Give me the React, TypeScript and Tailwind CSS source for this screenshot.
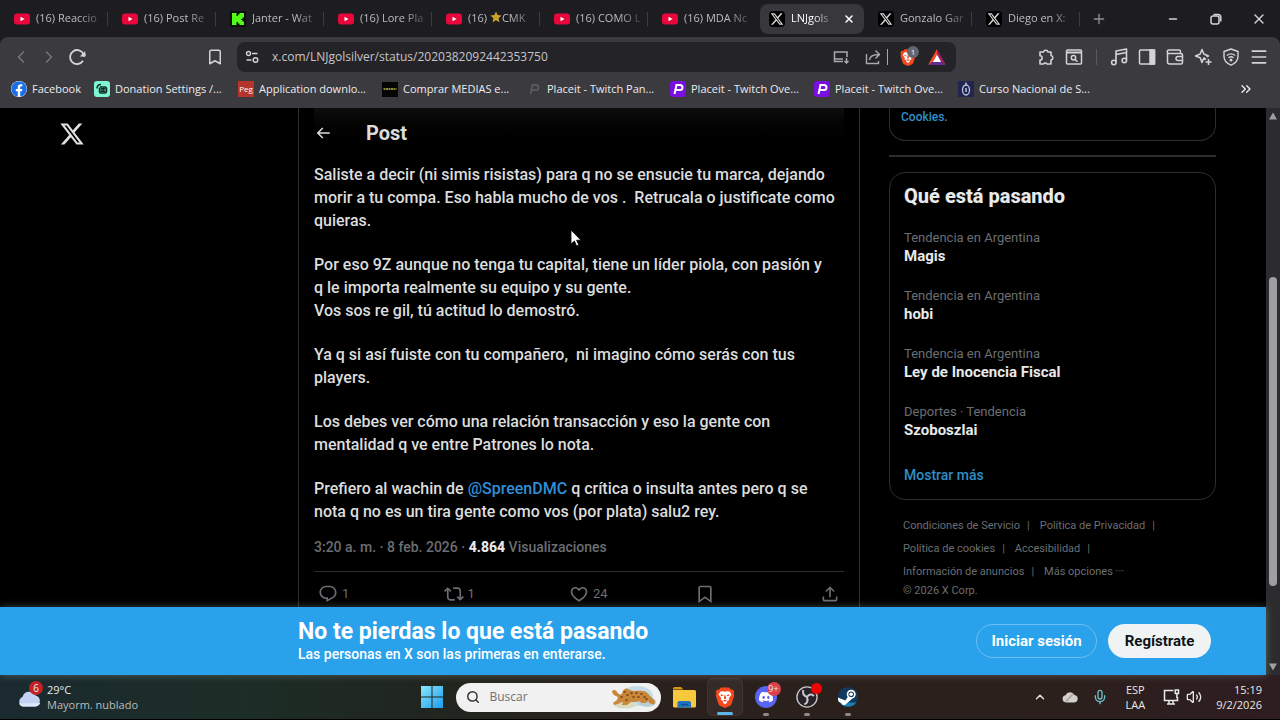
import { ReactNode } from 'react'
import { FaFacebook } from 'react-icons/fa'
import { SiDiscord } from 'react-icons/si'
import {
  Bookmark,
  ChevronLeft,
  ChevronRight,
  ChevronUp,
  ChevronsRight,
  Menu,
  Mic,
  Minus,
  Plus,
  Search,
  Volume2,
  X,
} from 'lucide-react'

interface IconProps {
  className?: string
}

interface TabInfo {
  icon: 'youtube' | 'kick' | 'x'
  title: ReactNode
  name: string
  active?: boolean
  divider?: boolean
}

const X_LOGO =
  'M18.244 2.25h3.308l-7.227 8.26 8.502 11.24H16.17l-5.214-6.817L4.99 21.75H1.68l7.73-8.835L1.254 2.25H8.08l4.713 6.231zm-1.161 17.52h1.833L7.084 4.126H5.117z'
const REPLY =
  'M1.751 10c0-4.42 3.584-8 8.005-8h4.366c4.49 0 8.129 3.64 8.129 8.13 0 2.96-1.607 5.68-4.196 7.11l-8.054 4.46v-3.69h-.067c-4.49.1-8.183-3.51-8.183-8.01zm8.005-6c-3.317 0-6.005 2.69-6.005 6 0 3.37 2.77 6.08 6.138 6.01l.351-.01h1.761v2.3l5.087-2.81c1.951-1.08 3.163-3.13 3.163-5.36 0-3.39-2.744-6.13-6.129-6.13H9.756z'
const REPOST =
  'M4.5 3.88l4.432 4.14-1.364 1.46L5.5 7.55V16c0 1.1.896 2 2 2H13v2H7.5c-2.209 0-4-1.79-4-4V7.55L1.432 9.48.068 8.02 4.5 3.88zM16.5 6H11V4h5.5c2.209 0 4 1.79 4 4v8.45l2.068-1.93 1.364 1.46-4.432 4.14-4.432-4.14 1.364-1.46 2.068 1.93V8c0-1.1-.896-2-2-2z'
const LIKE =
  'M16.697 5.5c-1.222-.06-2.679.51-3.89 2.16l-.805 1.09-.806-1.09C9.984 6.01 8.526 5.44 7.304 5.5c-1.243.07-2.349.78-2.91 1.91-.552 1.12-.633 2.78.479 4.82 1.074 1.97 3.257 4.27 7.129 6.61 3.87-2.34 6.052-4.64 7.126-6.61 1.111-2.04 1.03-3.7.477-4.82-.561-1.13-1.666-1.84-2.908-1.91zm4.187 7.69c-1.351 2.48-4.001 5.12-8.379 7.67l-.503.3-.504-.3c-4.379-2.55-7.029-5.19-8.382-7.67-1.36-2.5-1.41-4.86-.514-6.67.887-1.79 2.647-2.91 4.601-3.01 1.651-.09 3.368.56 4.798 2.01 1.429-1.45 3.146-2.1 4.796-2.01 1.954.1 3.714 1.22 4.601 3.01.896 1.81.846 4.17-.514 6.67z'
const SAVE =
  'M4 4.5C4 3.12 5.119 2 6.5 2h11C18.881 2 20 3.12 20 4.5v18.44l-8-5.71-8 5.71V4.5zM6.5 4c-.276 0-.5.22-.5.5v14.56l6-4.29 6 4.29V4.5c0-.28-.224-.5-.5-.5h-11z'
const SHARE =
  'M12 2.59l5.7 5.7-1.41 1.42L13 6.41V16h-2V6.41l-3.3 3.3-1.41-1.42L12 2.59zM21 15l-.02 3.51c0 1.38-1.12 2.49-2.5 2.49H5.5C4.11 21 3 19.88 3 18.5V15h2v3.5c0 .28.22.5.5.5h12.98c.28 0 .5-.22.5-.5L19 15h2z'
const BACK = 'M7.414 13l5.043 5.04-1.414 1.42L3.586 12l7.457-7.46 1.414 1.42L7.414 11H21v2H7.414z'

const Glyph = ({ d, className }: { d: string; className?: string }) => (
  <svg viewBox="0 0 24 24" fill="currentColor" className={className}>
    <path d={d} />
  </svg>
)

const YoutubeIcon = () => (
  <svg viewBox="0 0 16 16" className="w-4 h-4 shrink-0">
    <rect x="0" y="2.5" width="16" height="11" rx="3" fill="#e8063a" />
    <path d="M6.5 5.8 10.5 8l-4 2.2z" fill="#fff" />
  </svg>
)

const KickIcon = () => (
  <svg viewBox="0 0 16 16" className="w-4 h-4 shrink-0">
    <rect width="16" height="16" rx="1" fill="#0b0f0a" />
    <path d="M2 2h4.5v3H8V3.5h1.5V2H14v4.5h-1.5V8H11v1h1.5v1.5H14V14H9.5v-1.5H8V11H6.5v3H2z" fill="#53fc18" />
  </svg>
)

const XIcon = () => (
  <span className="w-4 h-4 shrink-0 rounded-sm bg-black text-[#d8d8d8] grid place-items-center">
    <Glyph d={X_LOGO} className="w-[14px] h-[14px]" />
  </span>
)

const BraveIcon = ({ className }: IconProps) => (
  <svg viewBox="0 0 24 24" className={className}>
    <path d="M16.5 1.5h-9L5.3 4 3.5 3.8 1.8 6.3l.8 2.1-.7 1.9 3 9.2c.3.9.7 1.4 1.5 2L12 24l5.6-2.5c.8-.6 1.2-1.1 1.5-2l3-9.2-.7-1.9.8-2.1-1.7-2.5-1.8.2z" fill="#f4481e" />
    <path d="M12 6.2 9.6 5.7 7 6.1 4.9 9.3l3 4.1-.6 1.7 2.9 1.7-.6 1.4L12 20l2.4-1.8-.6-1.4 2.9-1.7-.6-1.7 3-4.1L17 6.1l-2.6-.4z" fill="#fff" />
    <path d="m6.8 9 3.4.9-.8 1.3-1.8-.7zM17.2 9l-3.4.9.8 1.3 1.8-.7zM11.3 10h1.4l.5 3.6-1.2.8-1.2-.8zM9.8 15.7 12 14.9l2.2.8L12 17.2z" fill="#f4481e" />
  </svg>
)

const BatIcon = () => (
  <svg viewBox="0 0 18 16" className="w-[18px] h-4">
    <path d="M9 0 0 16l4.8-3L9 5.5z" fill="#ff4724" />
    <path d="M9 0l9 16-4.8-3L9 5.5z" fill="#9e1f63" />
    <path d="M0 16h18l-4.8-3H4.8z" fill="#662d91" />
    <path d="m9 5.5 4.2 7.5H4.8z" fill="#fff" />
  </svg>
)

const ReloadIcon = () => (
  <svg viewBox="0 0 18 18" className="w-[18px] h-[18px]" fill="none" stroke="currentColor" strokeWidth="1.8">
    <path d="M15 12.8A7 7 0 1 1 15.6 6.5" />
    <circle cx="15.8" cy="6.8" r="2" fill="currentColor" stroke="none" />
    <path d="M17.2 3v5.6h-5.4z" fill="currentColor" stroke="none" />
  </svg>
)

const SiteInfoIcon = () => (
  <svg viewBox="0 0 14 14" className="w-[14px] h-[14px]" fill="none" stroke="currentColor" strokeWidth="1.4">
    <circle cx="3.5" cy="3.5" r="2" />
    <path d="M7 3.5h5.5M1.5 10h5" />
    <circle cx="10.5" cy="10" r="2.3" />
  </svg>
)

const InstallIcon = () => (
  <svg viewBox="0 0 16 14" className="w-4 h-[14px]" fill="none" stroke="currentColor" strokeWidth="1.5">
    <path d="M14 7V2H1.5v9.5H10M1.500 9H10M13.5 8v4.5M11.5 11l2 2 2-2" />
  </svg>
)

const ShareArrowIcon = () => (
  <svg viewBox="0 0 16 16" className="w-4 h-4" fill="none" stroke="currentColor" strokeWidth="1.4">
    <path d="M1.5 5v9.5h12V12" />
    <path d="M4.5 11c.3-3.500 2.500-5.500 9.500-5.500M10.500 1.500l4 4-4 4" strokeLinejoin="round" />
  </svg>
)

const PuzzleIcon = () => (
  <svg viewBox="0 0 18 18" className="w-[18px] h-[18px]" fill="none" stroke="currentColor" strokeWidth="1.6" strokeLinejoin="round">
    <path d="M3 4h3.5a2.3 2.3 0 0 1 4.5 0H14v3.5a2.3 2.3 0 0 1 0 4.5v4h-4a2 2 0 0 0-3.5 0H3v-4a2 2 0 0 0 0-4.2z" />
  </svg>
)

const FindWindowIcon = () => (
  <svg viewBox="0 0 18 18" className="w-[18px] h-[18px]" fill="none" stroke="currentColor" strokeWidth="1.5">
    <rect x="1.5" y="2" width="15" height="14" rx="1" />
    <path d="M1.5 4.5h15" strokeWidth="2" />
    <circle cx="8.5" cy="9.8" r="2.2" />
    <path d="m10.2 11.5 2.2 2.2" />
  </svg>
)

const MusicIcon = () => (
  <svg viewBox="0 0 18 18" className="w-[18px] h-[18px]" fill="none" stroke="currentColor" strokeWidth="1.6" strokeLinejoin="round">
    <path d="M6 14V3l10.5-2v11M6 6.5l10.5-2" />
    <circle cx="3.8" cy="14.5" r="2.2" />
    <circle cx="14.3" cy="12.5" r="2.2" />
  </svg>
)

const SidebarIcon = () => (
  <svg viewBox="0 0 18 18" className="w-[18px] h-[18px]" fill="none" stroke="currentColor" strokeWidth="1.5">
    <rect x="1.5" y="2" width="15" height="14" rx="1" />
    <path d="M12 2h4.5v14H12z" fill="currentColor" />
  </svg>
)

const WalletIcon = () => (
  <svg viewBox="0 0 18 18" className="w-[18px] h-[18px]" fill="none" stroke="currentColor" strokeWidth="1.5">
    <path d="M14.5 5V3.5A1.500 1.500 0 0 0 13 2H3a1.700 1.700 0 0 0 0 3.500h12a1.500 1.500 0 0 1 1.500 1.500v7.500a1.500 1.500 0 0 1-1.500 1.500H3.500a2 2 0 0 1-2-2V4" />
    <path d="M16.5 8.5H12a2 2 0 0 0 0 4h4.5" />
  </svg>
)

const SparkleIcon = () => (
  <svg viewBox="0 0 18 18" className="w-[18px] h-[18px]" fill="none" stroke="currentColor" strokeWidth="1.5" strokeLinejoin="round">
    <path d="M12 11.300 9.800 10 8 14.500 6.200 9.800 1.500 8l4.700-2L8 1.500 9.800 6l4.700 2-2 .9" />
    <path d="M14.500 11v6M11.500 14h6" />
  </svg>
)

const VpnIcon = () => (
  <svg viewBox="0 0 18 18" className="w-[18px] h-[18px]" fill="none" stroke="currentColor" strokeWidth="1.4">
    <path d="M9 1 16 3.500v5c0 4-3 7-7 8.700-4-1.700-7-4.700-7-8.700v-5z" strokeLinejoin="round" />
    <path d="M4.800 7.500c2.600-2 5.800-2 8.400 0M6.500 9.800c1.500-1.200 3.500-1.200 5 0" />
    <circle cx="9" cy="12" r=".8" fill="currentColor" />
  </svg>
)

const RestoreIcon = () => (
  <svg viewBox="0 0 12 12" className="w-3 h-3" fill="none" stroke="currentColor" strokeWidth="1.5">
    <rect x="1" y="3" width="8" height="8" rx="2" />
    <path d="M3.5 1.500H8a2.800 2.800 0 0 1 2.800 2.800v4.200" />
  </svg>
)

const PlaceitIcon = ({ dim }: { dim?: boolean }) => (
  <svg viewBox="0 0 16 16" className="w-4 h-4 shrink-0">
    {!dim && <rect width="16" height="16" rx="3" fill="#7a0fe0" />}
    <path
      d="M5.500 4H10a2.200 2.200 0 0 1 0 5H6M6.500 4 4.500 13"
      fill="none"
      stroke={dim ? '#59595c' : '#fff'}
      strokeWidth="2"
    />
  </svg>
)

const tabIcons = {
  youtube: <YoutubeIcon />,
  kick: <KickIcon />,
  x: <XIcon />,
}

const tabs: TabInfo[] = [
  { icon: 'youtube', name: 'reaccion', title: '(16) Reaccio', divider: true },
  { icon: 'youtube', name: 'post', title: '(16) Post Re', divider: true },
  { icon: 'kick', name: 'janter', title: 'Janter - Wat', divider: true },
  { icon: 'youtube', name: 'lore', title: '(16) Lore Pla', divider: true },
  {
    icon: 'youtube',
    name: 'cmk',
    title: (
      <>
        (16){' '}
        <svg viewBox="0 0 12 12" className="inline w-3 h-3 mb-1">
          <path d="m6 .5 1.600 3.600 4 .4-3 2.700.9 4L6 9.200l-3.500 2 .9-4-3-2.700 4-.4z" fill="#c9a227" />
        </svg>
        CMK
      </>
    ),
    divider: true,
  },
  { icon: 'youtube', name: 'como', title: '(16) COMO L', divider: true },
  { icon: 'youtube', name: 'mda', title: '(16) MDA Nc' },
  { icon: 'x', name: 'lnj', title: 'LNJgols', active: true },
  { icon: 'x', name: 'gonzalo', title: 'Gonzalo Gar', divider: true },
  { icon: 'x', name: 'diego', title: 'Diego en X:', divider: true },
]

const bookmarks = [
  {
    title: 'Donation Settings /...',
    icon: (
      <svg viewBox="0 0 16 16" className="w-4 h-4 shrink-0">
        <rect width="16" height="16" rx="3" fill="#80f5d2" />
        <path d="M6 6h5a1.500 1.500 0 0 1 1.500 1.500v3A1.500 1.500 0 0 1 11 12H7a1.500 1.500 0 0 1-1.500-1.500V6.500M3 7.500C3 5 4.500 3.500 7 3.500" fill="none" stroke="#0b2b24" strokeWidth="1.5" />
        <path d="M6.500 7h5v4h-5z" fill="#0b2b24" />
        <path d="M7.500 8.500h1v1h-1zM9.800 8.500h1v1h-1z" fill="#80f5d2" />
      </svg>
    ),
  },
  {
    title: 'Application downlo...',
    icon: (
      <span className="w-4 h-4 shrink-0 bg-[#b5352c] text-white text-[8px] leading-4 text-center overflow-hidden">Peg</span>
    ),
  },
  {
    title: 'Comprar MEDIAS e...',
    icon: (
      <svg viewBox="0 0 16 16" className="w-4 h-4 shrink-0">
        <rect y="1" width="16" height="15" fill="#050505" />
        <path d="M1.500 8h13" stroke="#8a8c3a" strokeWidth="2" strokeDasharray="2 .5" />
      </svg>
    ),
  },
  { title: 'Placeit - Twitch Pan...', icon: <PlaceitIcon dim /> },
  { title: 'Placeit - Twitch Ove...', icon: <PlaceitIcon /> },
  { title: 'Placeit - Twitch Ove...', icon: <PlaceitIcon /> },
  {
    title: 'Curso Nacional de S...',
    icon: (
      <svg viewBox="0 0 16 16" className="w-4 h-4 shrink-0">
        <rect width="16" height="16" fill="#22264f" />
        <ellipse cx="8" cy="9" rx="3.5" ry="5" fill="none" stroke="#b9c2e0" strokeWidth="1.3" />
        <path d="M8 1.500v3M8 7v4" stroke="#b9c2e0" strokeWidth="1.5" />
      </svg>
    ),
  },
]

const paragraphs: ReactNode[] = [
  <>
    Saliste a decir (ni simis risistas) para q no se ensucie tu marca, dejando
    <br />
    morir a tu compa. Eso habla mucho de vos .&nbsp; Retrucala o justificate como
    <br />
    quieras.
  </>,
  <>
    Por eso 9Z aunque no tenga tu capital, tiene un líder piola, con pasión y
    <br />q le importa realmente su equipo y su gente.
    <br />
    Vos sos re gil, tú actitud lo demostró.
  </>,
  <>
    Ya q si así fuiste con tu compañero,&nbsp; ni imagino cómo serás con tus
    <br />
    players.
  </>,
  <>
    Los debes ver cómo una relación transacción y eso la gente con
    <br />
    mentalidad q ve entre Patrones lo nota.
  </>,
  <>
    Prefiero al wachin de{' '}
    <a href="#spreen" className="text-[#2f8fd8]">
      @SpreenDMC
    </a>{' '}
    q crítica o insulta antes pero q se
    <br />
    nota q no es un tira gente como vos (por plata) salu2 rey.
  </>,
]

const trends = [
  { label: 'Tendencia en Argentina', name: 'Magis' },
  { label: 'Tendencia en Argentina', name: 'hobi' },
  { label: 'Tendencia en Argentina', name: 'Ley de Inocencia Fiscal' },
  { label: 'Deportes · Tendencia', name: 'Szoboszlai' },
]

const footerRows = [
  ['Condiciones de Servicio', 'Política de Privacidad'],
  ['Política de cookies', 'Accesibilidad'],
  ['Información de anuncios', 'Más opciones ···'],
]

const actions = [
  { label: 'Responder', d: REPLY, count: '1' },
  { label: 'Repostear', d: REPOST, count: '1' },
  { label: 'Me gusta', d: LIKE, count: '24' },
  { label: 'Guardar', d: SAVE },
  { label: 'Compartir', d: SHARE },
]

const Tab = ({ tab }: { tab: TabInfo }) => (
  <div className="w-[108px] h-[30px] shrink-0 px-[2px] flex items-center">
    <div
      className={
        tab.active
          ? 'flex-1 min-w-0 h-full flex items-center rounded-lg bg-[#38373c] pl-[9px] pr-[9px] text-white'
          : 'flex-1 min-w-0 h-full flex items-center pl-[10px] text-[#bdbdc1]'
      }
    >
      {tabIcons[tab.icon]}
      <button
        className={
          tab.active
            ? 'ml-[6px] w-11 overflow-hidden whitespace-nowrap text-left text-[11px] [mask-image:linear-gradient(to_right,black_50%,transparent)]'
            : 'ml-[6px] flex-1 overflow-hidden whitespace-nowrap text-left text-[11px] [mask-image:linear-gradient(to_right,black_60%,transparent)]'
        }
      >
        {tab.title}
      </button>
      {tab.active && (
        <button aria-label="Cerrar pestaña" className="ml-auto">
          <X className="w-3 h-3" strokeWidth={3} />
        </button>
      )}
    </div>
    {tab.divider && <span className="w-px h-[14px] bg-[#3d3c41]" />}
  </div>
)

const ToolButton = ({ label, children }: { label: string; children: ReactNode }) => (
  <button aria-label={label} className="w-7 h-7 grid place-items-center shrink-0">
    {children}
  </button>
)

const BrowserHeader = () => (
  <header className="shrink-0 bg-[#1d1c21] text-[#d4d4d7] font-['Open_Sans','Noto_Sans',sans-serif]">
    <div className="h-[37px] pl-[2px] flex items-center">
      {tabs.map((tab) => (
        <Tab key={tab.name} tab={tab} />
      ))}
      <button aria-label="Nueva pestaña" className="ml-[9px] text-[#8f8f93]">
        <Plus className="w-4 h-4" />
      </button>
      <div className="ml-auto flex">
        <button aria-label="Minimizar" className="w-[43px] grid place-items-center">
          <Minus className="w-3 h-3" strokeWidth={3} />
        </button>
        <button aria-label="Restaurar" className="w-[43px] grid place-items-center">
          <RestoreIcon />
        </button>
        <button aria-label="Cerrar" className="w-[43px] grid place-items-center">
          <X className="w-4 h-4" />
        </button>
      </div>
    </div>

    <div className="rounded-t-lg bg-[#3b3a3f]">
      <div className="h-[39px] flex items-center">
        <div className="w-[237px] shrink-0 flex items-center pl-[7px] pr-2">
          <span className="text-[#77777b] flex">
            <ToolButton label="Atrás">
              <ChevronLeft className="w-5 h-5" strokeWidth={1.8} />
            </ToolButton>
            <ToolButton label="Adelante">
              <ChevronRight className="w-5 h-5" strokeWidth={1.8} />
            </ToolButton>
          </span>
          <ToolButton label="Recargar">
            <ReloadIcon />
          </ToolButton>
          <span className="ml-auto flex">
            <ToolButton label="Agregar marcador">
              <Bookmark className="w-[18px] h-[18px]" />
            </ToolButton>
          </span>
        </div>
        <div className="flex-1 h-[30px] rounded-lg bg-[#242328] flex items-center pl-2 pr-[5px]">
          <SiteInfoIcon />
          <input
            type="text"
            aria-label="Dirección"
            defaultValue="x.com/LNJgolsilver/status/2020382092442353750"
            className="flex-1 min-w-0 ml-[13px] bg-transparent text-[12px] font-medium text-[#c6c6c9] outline-none"
          />
          <div className="flex items-center text-[#a9a9ad]">
            <span className="w-9 grid place-items-center">
              <InstallIcon />
            </span>
            <span className="w-7 grid place-items-center">
              <ShareArrowIcon />
            </span>
            <span className="w-px h-4 mr-[5px] bg-[#a9a9ad]" />
            <span className="relative w-[30px] grid place-items-center">
              <BraveIcon className="w-[18px] h-[18px]" />
              <span className="absolute -top-[2px] right-1 w-3 h-3 rounded-full bg-[#65656f] text-[8px] leading-3 text-center text-white">
                1
              </span>
            </span>
            <span className="w-7 grid place-items-center">
              <BatIcon />
            </span>
          </div>
        </div>
        <div className="w-[324px] shrink-0 flex items-center justify-end pr-[7px]">
          <ToolButton label="Extensiones">
            <PuzzleIcon />
          </ToolButton>
          <ToolButton label="Buscar pestañas">
            <FindWindowIcon />
          </ToolButton>
          <span className="w-px h-4 mx-2 bg-[#5a595e]" />
          <ToolButton label="Lista de reproducción">
            <MusicIcon />
          </ToolButton>
          <ToolButton label="Barra lateral">
            <SidebarIcon />
          </ToolButton>
          <ToolButton label="Cartera">
            <WalletIcon />
          </ToolButton>
          <ToolButton label="Leo">
            <SparkleIcon />
          </ToolButton>
          <ToolButton label="VPN">
            <VpnIcon />
          </ToolButton>
          <ToolButton label="Menú">
            <Menu className="w-5 h-5" />
          </ToolButton>
        </div>
      </div>

      <nav className="h-8 pb-[6px] pl-[11px] pr-[26px] flex items-center text-[11px] text-[#ececee]">
        <a href="#facebook" className="w-[83px] shrink-0 flex items-center gap-[5px]">
          <FaFacebook className="w-4 h-4 text-[#1a6fe8] bg-white rounded-full" />
          Facebook
        </a>
        {bookmarks.map((item, index) => (
          <a
            key={index}
            href="#bookmark"
            className="w-36 shrink-0 flex items-center gap-[5px] whitespace-nowrap"
          >
            {item.icon}
            {item.title}
          </a>
        ))}
        <button aria-label="Más marcadores" className="ml-auto">
          <ChevronsRight className="w-4 h-4" />
        </button>
      </nav>
    </div>
  </header>
)

const Post = () => (
  <main className="w-[562px] shrink-0 border-x border-[#2b2d30] px-[15px] text-[#dcdddd]">
    <div className="h-[50px] flex items-center bg-linear-to-b from-[#0d0d0d] to-black">
      <button aria-label="Volver">
        <Glyph d={BACK} className="w-[18px] h-[18px]" />
      </button>
      <h1 className="ml-[34px] text-[20px] leading-6 font-bold">Post</h1>
    </div>
    <div className="mt-[5px] flex flex-col gap-[21px] text-[16px] leading-[23px] font-medium whitespace-nowrap">
      {paragraphs.map((text, index) => (
        <p key={index}>{text}</p>
      ))}
    </div>
    <p className="mt-3 text-[14px] leading-6 font-medium text-[#6b6e72]">
      3:20 a. m. · 8 feb. 2026 · <b className="font-extrabold text-[#e7e9ea]">4.864</b> Visualizaciones
    </p>
    <div className="mt-3 border-t border-[#2b2d30] h-11 px-1 flex items-center justify-between text-[#6b6e72]">
      {actions.map((action) => (
        <button key={action.label} aria-label={action.label} className="w-5 flex items-center gap-1 text-[13px]">
          <Glyph d={action.d} className="w-5 h-5 shrink-0" />
          {action.count}
        </button>
      ))}
    </div>
  </main>
)

const Sidebar = () => (
  <aside className="w-[327px] shrink-0 ml-[29px] mr-[50px]">
    <div className="h-[33px] border-x border-b border-[#2b2d30] rounded-b-2xl px-[11px] text-[12px] leading-[18px] font-medium">
      <a href="#cookies" className="text-[#2f8fc8]">
        Cookies.
      </a>
    </div>
    <hr className="mt-[14px] border-t-2 border-[#2b2d30]" />
    <section className="mt-[15px] h-[328px] border border-[#2b2d30] rounded-2xl px-[14px]">
      <h2 className="mt-2 text-[20px] leading-[30px] font-extrabold text-[#e7e9ea]">Qué está pasando</h2>
      <ul className="mt-[17px]">
        {trends.map((trend) => (
          <li key={trend.name} className="h-[58px]">
            <p className="text-[13px] leading-[19px] text-[#6b6e72]">{trend.label}</p>
            <p className="text-[15px] leading-[19px] font-bold text-[#e7e9ea]">{trend.name}</p>
          </li>
        ))}
      </ul>
      <a href="#mas" className="block mt-[5px] text-[14px] leading-5 font-medium text-[#2f8fc8]">
        Mostrar más
      </a>
    </section>
    <footer className="mt-[14px] px-[14px] text-[11px] text-[#6b6e72]">
      {footerRows.map((row, index) => (
        <p key={index} className="h-[23px] leading-[23px]">
          <a href="#legal">{row[0]}</a>
          <span className="mx-[7px]">|</span>
          <a href="#legal" className="ml-[3px]">
            {row[1]}
          </a>
          {index < 2 && <span className="mx-[7px]">|</span>}
        </p>
      ))}
      <p className="leading-4">© 2026 X Corp.</p>
    </footer>
  </aside>
)

const LoginBanner = () => (
  <section className="relative z-10 h-[68px] shrink-0 bg-[#29a1eb] text-white flex items-center justify-between pl-[298px] pr-[55px] shadow-[0_0_8px_rgba(255,255,255,0.25)]">
    <div>
      <h2 className="text-[23px] leading-[26px] font-bold">No te pierdas lo que está pasando</h2>
      <p className="text-[14px] leading-[18px] font-medium">Las personas en X son las primeras en enterarse.</p>
    </div>
    <div className="flex gap-[11px] text-[15px] font-bold">
      <button className="w-[121px] h-[34px] rounded-full border border-[#6bbff3]">Iniciar sesión</button>
      <button className="w-[103px] h-[34px] rounded-full bg-[#eff3f4] text-[#0f1419]">Regístrate</button>
    </div>
  </section>
)

const Scrollbar = () => (
  <div className="w-[14px] shrink-0 bg-[#2c2c2e] flex flex-col items-center py-1">
    <svg viewBox="0 0 8 8" className="w-2 h-2" fill="#9f9fa1">
      <path d="M4 .5 8 7.500H0z" />
    </svg>
    <div className="flex-[157]" />
    <div className="flex-[309] w-2 rounded-full bg-[#9f9fa1]" />
    <div className="flex-[77]" />
    <svg viewBox="0 0 8 8" className="w-2 h-2" fill="#9f9fa1">
      <path d="M4 7.500 0 .5h8z" />
    </svg>
  </div>
)

const TaskApp = ({ label, active, children }: { label: string; active?: boolean; children: ReactNode }) => (
  <button
    aria-label={label}
    className={
      active
        ? 'relative w-9 h-[38px] rounded-md bg-white/5 border border-white/5 grid place-items-center'
        : 'relative w-9 h-[38px] grid place-items-center'
    }
  >
    {children}
    <span
      className={
        active
          ? 'absolute bottom-0 w-4 h-[3px] rounded-full bg-[#5fb6e8]'
          : 'absolute bottom-0 w-[6px] h-[3px] rounded-full bg-[#8d8a88]'
      }
    />
  </button>
)

const Taskbar = () => (
  <footer className="h-[45px] shrink-0 border-b border-black bg-[linear-gradient(to_right,#1a2a30,#1c2d27_18%,#20261f_33%,#2a201d_50%,#2b201b_80%,#2e1d21)] grid grid-cols-[1fr_auto_1fr] items-center text-[11px] text-[#e9e9e9] font-['Open_Sans','Noto_Sans',sans-serif]">
    <div className="pl-[17px] flex items-center gap-[6px]">
      <span className="relative w-6 h-8">
        <svg viewBox="0 0 24 32" className="w-6 h-8">
          <path d="M6 25.500a5 5 0 0 1-.5-9.500 7 7 0 0 1 13-1.500 5.600 5.600 0 0 1-.5 11z" fill="#c3d2f2" />
          <path d="M2 22.500c1 2 2.500 3 4 3h12c2.500 0 4.500-1.200 5.200-3.500z" fill="#dfe8fb" />
        </svg>
        <span className="absolute top-0 left-3 w-[14px] h-[14px] rounded-full bg-[#c22227] text-[10px] leading-[14px] text-center">
          6
        </span>
      </span>
      <div className="leading-[15px]">
        <p>29°C</p>
        <p className="text-[#b9bebd]">Mayorm. nublado</p>
      </div>
    </div>

    <div className="pl-[6px] flex items-center">
      <button aria-label="Inicio">
        <svg viewBox="0 0 22 22" className="w-[22px] h-[22px]">
          <defs>
            <linearGradient id="win" x1="0" y1="0" x2="1" y2="1">
              <stop offset="0" stopColor="#8be6fb" />
              <stop offset="1" stopColor="#1c9cf0" />
            </linearGradient>
          </defs>
          <path d="M0 0h10.500v10.500H0zM11.500 0H22v10.500H11.500zM0 11.500h10.500V22H0zM11.500 11.500H22V22H11.500z" fill="url(#win)" />
        </svg>
      </button>
      <label className="ml-[13px] w-[205px] h-[29px] rounded-full bg-[#f1f1f1] flex items-center pl-[10px] pr-1 overflow-hidden">
        <Search className="w-[14px] h-[14px] text-[#333]" strokeWidth={2.5} />
        <input
          type="text"
          placeholder="Buscar"
          aria-label="Buscar"
          className="ml-[10px] flex-1 min-w-0 bg-transparent text-[12px] placeholder:text-[#707070] outline-none"
        />
        <svg viewBox="0 0 46 26" className="w-[46px] h-[26px]">
          <ellipse cx="26" cy="12" rx="16" ry="10" fill="#c6dbe3" />
          <ellipse cx="14" cy="21" rx="11" ry="3.5" fill="#d8dcc0" />
          <ellipse cx="36" cy="18" rx="9" ry="5" fill="#b9cdd6" />
          <path d="M1 7c2-2 4-1 5 1s3 3 5 2l1-3c1-2 3-3 5-2l2 1c4 2 8 0 12 1 4 0 6 2 8 5 2 2 4 3 5 6 0 2-1 3-3 2-2 0-3-2-4-3l-2 2h-5l-1-2c-3 1-6 1-9 1l-4 3h-5l1-3c-2 0-3 1-5 2l-4 1-1-2 4-3 1-3C4 12 1 10 1 7z" fill="#c98739" />
          <path d="M13 8h1m2 3h1m3-2h1m1 4h1m2-4h1m1 4h1m2-3h1m2 3h1M10 13h1m4 3h1m19-1h1" stroke="#6b3a12" strokeWidth="1.5" strokeLinecap="round" />
        </svg>
      </label>
      <button aria-label="Explorador de archivos" className="ml-3">
        <svg viewBox="0 0 23 22" className="w-[23px] h-[22px]">
          <path d="M0 2.500A1.500 1.500 0 0 1 1.500 1H8l2.500 2.500H0z" fill="#d9980f" />
          <path d="M0 4h21.500A1.500 1.500 0 0 1 23 5.500V20a1.500 1.500 0 0 1-1.500 1.500h-20A1.500 1.500 0 0 1 0 20z" fill="#f8c93c" />
          <path d="M4.500 21.500V17A2 2 0 0 1 6.500 15h9.500a2 2 0 0 1 2 2v4.500z" fill="#1f72c4" />
          <path d="M8 18.500h7" stroke="#124b8c" strokeWidth="1.5" />
        </svg>
      </button>
      <div className="ml-[11px] flex gap-[5px]">
        <TaskApp label="Brave" active>
          <BraveIcon className="w-[22px] h-[22px]" />
        </TaskApp>
        <TaskApp label="Discord">
          <span className="w-[22px] h-[22px] rounded-full bg-[#5865f2] grid place-items-center">
            <SiDiscord className="w-[14px] h-[14px] text-white" />
          </span>
          <span className="absolute top-[4px] right-[3px] w-[14px] h-[14px] rounded-full bg-[#d8434b] text-[9px] leading-[14px] text-center">
            9+
          </span>
        </TaskApp>
        <TaskApp label="OBS Studio">
          <svg viewBox="0 0 24 24" className="w-[22px] h-[22px]">
            <circle cx="12" cy="12" r="11" fill="#26242a" stroke="#c9c7c7" strokeWidth="1.5" />
            <path d="M8 4.500c-1 3 .5 6 4 7.500M19.500 11c-2-2.500-5-2.500-7.500 1M9 20c3-.5 4.500-4 3-8" fill="none" stroke="#c9c7c7" strokeWidth="2.2" />
          </svg>
          <span className="absolute top-[5px] right-[3px] w-[11px] h-[11px] rounded-full bg-[#f00505]" />
        </TaskApp>
        <TaskApp label="Steam">
          <svg viewBox="0 0 24 24" className="w-[22px] h-[22px]">
            <circle cx="12" cy="12" r="11" fill="#12385f" />
            <path d="M3 18a11 11 0 0 0 18 0z" fill="#1c7fb5" />
            <circle cx="15.5" cy="9" r="4" fill="none" stroke="#fff" strokeWidth="1.8" />
            <circle cx="15.5" cy="9" r="2" fill="#fff" />
            <path d="m1 12.500 8 3.300 3.500-5 4 3-6 5.200a3.300 3.300 0 0 1-6-.5L1.500 17z" fill="#fff" />
          </svg>
        </TaskApp>
      </div>
    </div>

    <div className="pr-[18px] flex items-center justify-end">
      <ChevronUp className="w-[14px] h-[14px]" strokeWidth={2.5} />
      <svg viewBox="0 0 16 12" className="ml-[15px] w-4 h-3">
        <path d="M4 11.500A3.700 3.700 0 0 1 3.500 4.200 5 5 0 0 1 12.500 4a3.800 3.800 0 0 1 0 7.500z" fill="#d3d0cc" />
        <path d="M4 10.500 11 3" stroke="#a5a29f" strokeWidth="1.5" />
      </svg>
      <Mic className="ml-[14px] w-4 h-4 text-[#6fc0cc]" />
      <div className="ml-[18px] leading-[15px] text-center">
        <p>ESP</p>
        <p>LAA</p>
      </div>
      <svg viewBox="0 0 17 16" className="ml-[18px] w-[17px] h-4" fill="none" stroke="currentColor" strokeWidth="1.5">
        <path d="M10.500 1.500H1.500v10h13V8M4 15h8M6 11.500V15M10 11.500V15" />
        <path d="M12.300 1h3.200v3.500h-3.200zM13.900 4.500V9" />
      </svg>
      <Volume2 className="ml-[6px] w-4 h-4" />
      <div className="ml-[14px] leading-[15px] text-right">
        <p>15:19</p>
        <p>9/2/2026</p>
      </div>
    </div>
  </footer>
)

const App = () => {
  return (
    <div className="relative h-screen flex flex-col overflow-hidden bg-black">
      <BrowserHeader />
      <div className="flex-1 min-h-0 flex font-['Roboto','Liberation_Sans',sans-serif]">
        <div className="flex-1 min-w-0 flex flex-col">
          <div className="flex-1 min-h-0 flex overflow-hidden">
            <div className="flex-1 pt-[13px] pl-[59px]">
              <a href="#home" aria-label="X" className="block w-6 text-[#e0e0e0]">
                <Glyph d={X_LOGO} className="w-[26px] h-[26px]" />
              </a>
            </div>
            <Post />
            <Sidebar />
          </div>
          <LoginBanner />
        </div>
        <Scrollbar />
      </div>
      <Taskbar />
      {/* mouse pointer */}
      <svg viewBox="0 0 12 18" className="absolute left-[570px] top-[229px] w-3 h-[18px]">
        <path d="M1 1v14l3.400-3 2.200 5 2.200-1-2.200-4.800H11z" fill="#fff" stroke="#000" strokeWidth=".8" />
      </svg>
    </div>
  )
}

export default App
